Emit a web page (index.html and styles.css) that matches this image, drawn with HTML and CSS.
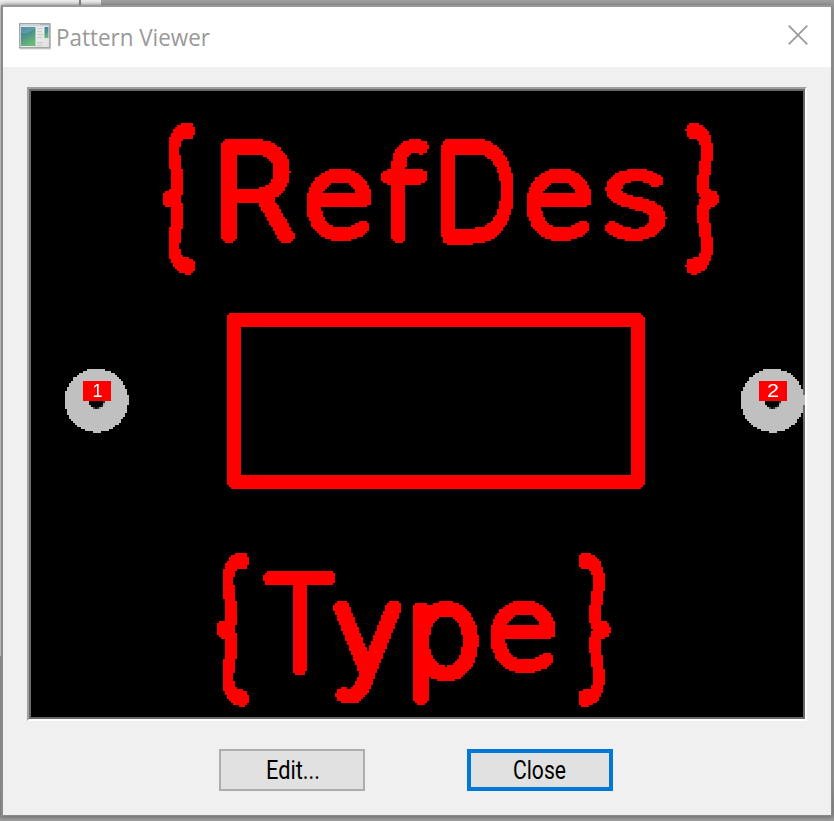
FILE: index.html
```html
<!DOCTYPE html>
<html lang="en">
<head>
<meta charset="utf-8">
<title>Pattern Viewer</title>
<link rel="stylesheet" href="styles.css">
</head>
<body>
<div class="behind"></div>
<div class="behind-tab"></div>
<main class="window">
  <header class="titlebar">
    <svg class="app-icon" width="32" height="27" viewBox="0 0 32 27">
      <defs><linearGradient id="g" x1="0" y1="0" x2=".4" y2="1"><stop offset="0" stop-color="#427fac"/><stop offset=".5" stop-color="#4b938c"/><stop offset="1" stop-color="#6cb875"/></linearGradient>
      <linearGradient id="f" x1="0" y1="0" x2="1" y2="1"><stop offset="0" stop-color="#fff"/><stop offset="1" stop-color="#dedede"/></linearGradient></defs>
      <rect x="1" y="1.500" width="31" height="25" fill="#d8d8d8"/>
      <rect x=".75" y=".75" width="30" height="24" fill="url(#f)" stroke="#a3a7aa" stroke-width="1.500"/>
      <path d="M2 2.500H30" stroke="#cbd3dc" stroke-width="2"/><path d="M21 1.500H30" stroke="#a5b2bd"/>
      <rect x="2" y="4" width="14.500" height="19" fill="url(#g)"/>
      <path d="M2 10Q9 11 16 6V4H2Z" fill="#fff" opacity=".12"/>
      <path d="M18 5.500h6M18 8.500h5M18 11.500h6M18 14.500h5M18 19.500h6M18 22.500h5" stroke="#cfcfcf" stroke-width="1.500"/>
      <rect x="25.500" y="4" width="4" height="11" fill="url(#g)"/>
    </svg>
    <h1 class="title"><svg width="160" height="34"><text x="0" y="27" textLength="154" lengthAdjust="spacingAndGlyphs">Pattern Viewer</text></svg></h1>
    <svg class="close-icon" width="20" height="20" viewBox="0 0 20 20"><path d="M.7.700 19.300 19.300M19.300.700.700 19.300" stroke="#999" stroke-width="1.700" fill="none"/></svg>
  </header>
  <section class="viewer">
    <svg class="canvas" viewBox="31 91 772 626" width="772" height="626">
      <defs>
        <!-- Draws the board in hard-edged 2px cells. -->
        <filter id="cells" filterUnits="userSpaceOnUse" x="31" y="91" width="776" height="626" color-interpolation-filters="sRGB">
          <feFlood x="32" y="92" width="1" height="1" flood-color="#000" result="dot"/>
          <feOffset in="dot" x="31" y="91" width="2" height="2" dx="0" dy="0"/>
          <feTile result="grid"/>
          <feComposite in="SourceGraphic" in2="grid" operator="in"/>
          <feComponentTransfer result="a"><feFuncA type="discrete" tableValues="0 1"/></feComponentTransfer>
          <feOffset in="a" dx="-1" dy="0" result="b"/>
          <feMerge result="row"><feMergeNode in="a"/><feMergeNode in="b"/></feMerge>
          <feOffset in="row" dx="0" dy="-1" result="c"/>
          <feMerge><feMergeNode in="row"/><feMergeNode in="c"/></feMerge>
        </filter>
      </defs>
      <g filter="url(#cells)">
        <g id="lettering" class="lettering"></g>
        <rect x="234" y="320" width="404" height="162" fill="none" stroke="#f00" stroke-width="14" stroke-linejoin="round"/>
        <circle cx="97" cy="401" r="32" fill="#c0c0c0"/><circle cx="97" cy="401" r="8"/><rect x="83" y="381" width="28" height="20" fill="#f00"/>
        <circle cx="773" cy="401" r="32" fill="#c0c0c0"/><circle cx="773" cy="401" r="8"/><rect x="759" y="381" width="28" height="20" fill="#f00"/>
      </g>
      <text class="pad-number" x="97.500" y="397">1</text>
      <text class="pad-number" x="773" y="397" textLength="12" lengthAdjust="spacingAndGlyphs">2</text>
    </svg>
  </section>
  <footer class="actions">
    <button class="button"><svg width="100" height="34"><text x="24" y="26" textLength="54" lengthAdjust="spacingAndGlyphs">Edit...</text></svg></button>
    <button class="button button-default"><svg width="100" height="34"><text x="23" y="26" textLength="53" lengthAdjust="spacingAndGlyphs">Close</text></svg></button>
  </footer>
</main>
<script src="script.js"></script>
</body>
</html>
```
FILE: styles.css
```css
* { box-sizing: border-box; }
body { margin: 0; width: 834px; height: 821px; overflow: hidden; position: relative; padding: 5px 0 0 1px; background: linear-gradient(#a0a0a0, #a0a0a0 780px, #8c8c8c 816px, #a0a0a0); font-family: Roboto, "Liberation Sans", sans-serif; }
.behind { position: absolute; left: 0; top: 0; width: 101px; height: 656px; background: #f0f0f0; }
.behind-tab { position: absolute; left: 79px; top: 0; width: 2px; height: 7px; background: #7c8190; }
.window { position: relative; width: 831px; height: 811px; border: 2px solid #8a8a8a; border-top-color: #999; border-bottom-width: 1px; border-right-width: 1px; background: #f0f0f0; box-shadow: 0 0 5px #666; display: flex; flex-direction: column; }
.titlebar { height: 60px; background: #fff; display: flex; align-items: center; padding: 0 23px 2px 16px; }
.app-icon { display: block; }
.title { margin: 0 0 0 5px; height: 34px; font: 400 24px "Open Sans", "Noto Sans", sans-serif; fill: #999; }
.title svg { display: block; overflow: visible; }
.close-icon { display: block; margin-left: auto; margin-bottom: 2px; }
.viewer { width: 780px; height: 634px; margin: 20px 0 0 24px; border: 2px solid; border-color: #a0a0a0 #fff #fff #a0a0a0; background: #000; box-shadow: inset 0 0 0 2px #696969; padding: 2px; }
.canvas { display: block; overflow: visible; }
.lettering text { font: 100 100px Lato, sans-serif; fill: #f00; stroke: #f00; stroke-width: 13px; stroke-linejoin: round; stroke-linecap: round; vector-effect: non-scaling-stroke; }
.lettering .curved { font-family: Inter, sans-serif; }
.pad-number { font: 18px "Liberation Sans", sans-serif; fill: #fff; text-anchor: middle; }
.actions { display: flex; gap: 102px; margin: 28px 0 0 216px; }
.button { width: 146px; height: 42px; padding: 0; border: 2px solid #adadad; background: #e1e1e1; display: flex; align-items: center; justify-content: center; font: 25px Roboto, sans-serif; }
.button-default { border: 4px solid #0078d7; }
```
FILE: script.js
```js
// Each character is fitted to its box on the board: [char, left, top, right, bottom].
const glyphs = [
  ["{", 161, 123, 197, 273], ["R", 221, 139, 295, 243], ["e", 307, 169, 373, 243],
  ["f", 381, 139, 429, 243], ["D", 441, 139, 515, 243], ["e", 527, 169, 593, 243],
  ["s", 605, 169, 667, 243], ["}", 685, 123, 721, 273],
  ["{", 215, 553, 251, 705], ["T", 263, 571, 337, 675], ["y", 333, 601, 403, 705],
  ["p", 413, 601, 479, 705], ["e", 491, 601, 557, 675], ["}", 577, 553, 613, 705]
];
const curved = "Ryp";
const pen = 6.5;
const ctx = document.createElement("canvas").getContext("2d");
const layer = document.getElementById("lettering");
for (const [ch, l, t, r, b] of glyphs) {
  const isCurved = curved.includes(ch);
  ctx.font = `100 100px ${isCurved ? "Inter" : "Lato"}`;
  const m = ctx.measureText(ch);
  const sx = (r - l - 2 * pen) / (m.actualBoundingBoxRight + m.actualBoundingBoxLeft);
  const sy = (b - t - 2 * pen) / (m.actualBoundingBoxAscent + m.actualBoundingBoxDescent);
  const el = document.createElementNS("http://www.w3.org/2000/svg", "text");
  el.textContent = ch;
  if (isCurved) el.setAttribute("class", "curved");
  const x = l + pen + m.actualBoundingBoxLeft * sx;
  const y = t + pen + m.actualBoundingBoxAscent * sy;
  el.setAttribute("transform", `translate(${x} ${y}) scale(${sx} ${sy})`);
  layer.append(el);
}
```
